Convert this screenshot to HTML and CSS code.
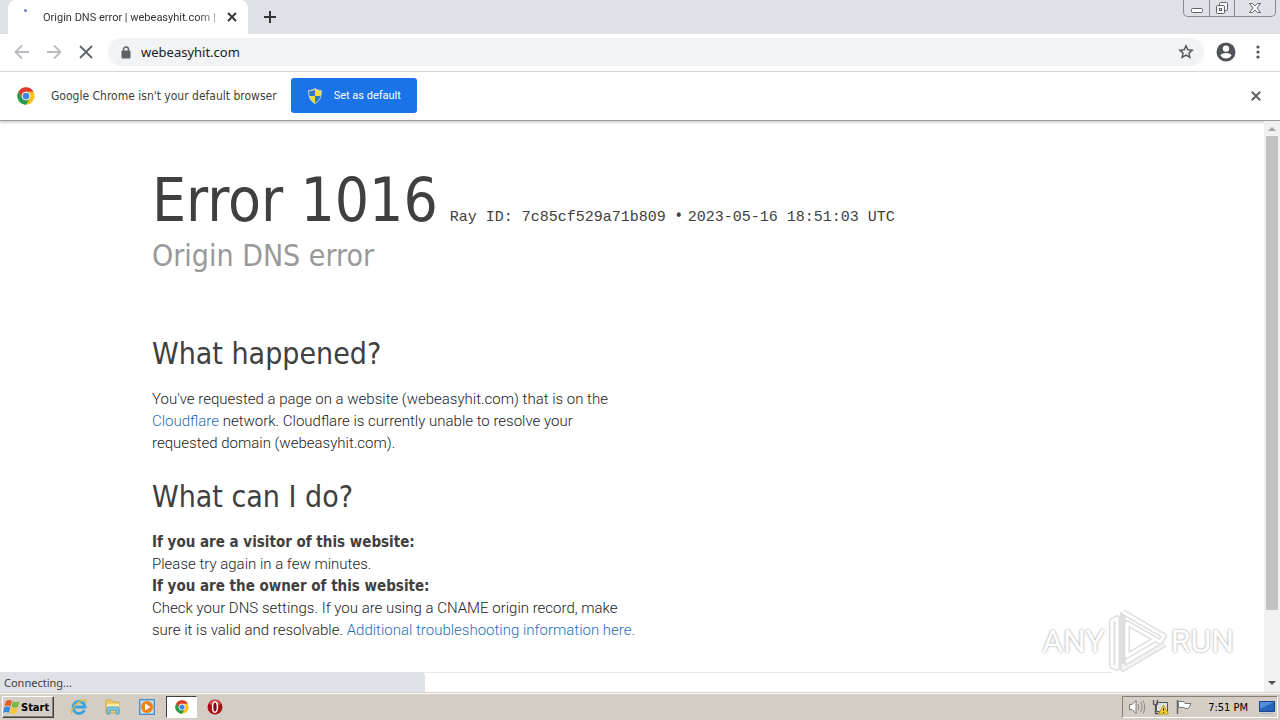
FILE: index.html
```html
<!DOCTYPE html>
<html lang="en">
<head>
<meta charset="utf-8">
<title>Origin DNS error | webeasyhit.com | Cloudflare</title>
<link rel="stylesheet" href="styles.css">
</head>
<body>
<svg class="defs" aria-hidden="true">
  <symbol id="chrome" viewBox="0 0 48 48">
    <circle cx="24" cy="24" r="23" fill="#fbc116"/>
    <path d="M4 12.500A23 23 0 0 1 44 12.500H24A11.500 11.500 0 0 0 14 29.700z" fill="#dc3b2e"/>
    <path d="M4 12.500A23 23 0 0 0 24 47L34 29.700A11.500 11.500 0 0 1 14 29.700z" fill="#229a50"/>
    <circle cx="24" cy="24" r="11.500" fill="#fff"/>
    <circle cx="24" cy="24" r="9" fill="#4285e8"/>
  </symbol>
</svg>
<header class="tabstrip">
  <div class="tab">
    <span class="spinner"></span>
    <span class="tab-title">Origin DNS error | webeasyhit.com |</span>
    <button class="icon-btn tab-close" aria-label="Close tab"><svg width="10" height="10" viewBox="0 0 10 10"><path d="M1 1l8 8M9 1l-8 8" stroke="#303236" stroke-width="1.800"/></svg></button>
  </div>
  <button class="icon-btn new-tab" aria-label="New tab"><svg width="12" height="12" viewBox="0 0 12 12"><path d="M6 0v12M0 6h12" stroke="#303236" stroke-width="2"/></svg></button>
  <div class="window-controls">
    <button class="win-btn" aria-label="Minimize"><svg width="14" height="16" viewBox="0 0 14 16"><rect x="1.500" y="8.500" width="11" height="4" rx="1" fill="#fff" stroke="#5d626a"/></svg></button>
    <button class="win-btn" aria-label="Restore"><svg width="14" height="16" viewBox="0 0 14 16"><g fill="#f8f9fb" stroke="#5d626a"><rect x="4.500" y="2.500" width="8" height="8" rx="1"/><rect x="1.500" y="5.500" width="8" height="8" rx="1"/><rect x="4.500" y="8.500" width="2" height="2"/></g></svg></button>
    <button class="win-btn win-close" aria-label="Close"><svg width="14" height="16" viewBox="0 0 14 16"><path d="M1.500 3.500h3L7 6l2.500-2.500h3L9 8l3.500 4.500h-3L7 10l-2.500 2.500h-3L5 8z" fill="#fff" stroke="#5d626a"/></svg></button>
  </div>
</header>
<nav class="toolbar">
  <button class="icon-btn nav-btn" aria-label="Back"><svg width="16" height="16" viewBox="0 0 16 16"><path d="M15 8H2M8 1.500L1.500 8 8 14.500" fill="none" stroke="#b9bbbe" stroke-width="1.800"/></svg></button>
  <button class="icon-btn nav-btn" aria-label="Forward"><svg width="16" height="16" viewBox="0 0 16 16"><path d="M1 8h13M8 1.500L14.500 8 8 14.500" fill="none" stroke="#b9bbbe" stroke-width="1.800"/></svg></button>
  <button class="icon-btn nav-btn" aria-label="Stop"><svg width="14" height="14" viewBox="0 0 14 14"><path d="M1 1l12 12M13 1L1 13" stroke="#5f6368" stroke-width="1.800"/></svg></button>
  <div class="omnibox">
    <svg width="10" height="13" viewBox="0 0 10 13"><path d="M2.500 5V3.500a2.500 2.500 0 0 1 5 0V5" fill="none" stroke="#5f6368" stroke-width="1.500"/><rect x="0.500" y="4.500" width="9" height="8" rx="1" fill="#5f6368"/></svg>
    <input class="url" type="text" aria-label="Address" value="webeasyhit.com">
    <button class="icon-btn" aria-label="Bookmark"><svg width="16" height="16" viewBox="0 0 16 16"><path d="M8 1.800l1.800 4 4.400.4-3.300 2.900 1 4.300L8 11.100l-3.900 2.300 1-4.300L1.800 6.200l4.400-.4z" fill="none" stroke="#50545a" stroke-width="1.400"/></svg></button>
  </div>
  <button class="icon-btn profile" aria-label="Profile"><svg width="20" height="20" viewBox="0 0 20 20"><circle cx="10" cy="10" r="9.500" fill="#505358"/><circle cx="10" cy="6.600" r="3.200" fill="#fff"/><path d="M4.300 13.500C5.600 11.700 8 11 10 11s4.400.7 5.700 2.500A7 7 0 0 1 10 16.500a7 7 0 0 1-5.700-3z" fill="#fff"/></svg></button>
  <button class="icon-btn menu" aria-label="Menu"><svg width="4" height="14" viewBox="0 0 4 14" fill="#505358"><circle cx="2" cy="2" r="1.600"/><circle cx="2" cy="7" r="1.600"/><circle cx="2" cy="12" r="1.600"/></svg></button>
</nav>
<section class="infobar">
  <svg width="18" height="18"><use href="#chrome"/></svg>
  <span class="infobar-text">Google Chrome isn't your default browser</span>
  <button class="default-btn">
    <svg width="14" height="16" viewBox="0 0 14 16"><path d="M7 .5C5 2 3 2.500.7 2.500c0 6 1 10 6.300 13 5.300-3 6.300-7 6.300-13C11 2.500 9 2 7 .5z" fill="#f5d938" stroke="#c5d5dd"/><path d="M7 1.700V8H1.500C1.200 6.500 1.200 5 1.200 3.200 3.500 3.100 5.200 2.800 7 1.700zM7 8h5.500C11.800 11 10.200 13.200 7 15z" fill="#2c78c8"/></svg>
    Set as default
  </button>
  <button class="icon-btn infobar-close" aria-label="Dismiss"><svg width="10" height="10" viewBox="0 0 10 10"><path d="M.8.800l8.400 8.400M9.200.800L.8 9.200" stroke="#5f6368" stroke-width="2"/></svg></button>
</section>
<div class="viewport">
  <main class="page">
    <div class="wrapper">
      <header class="error-head">
        <h1 class="code">Error 1016</h1>
        <span class="ray">Ray ID: 7c85cf529a71b809</span>
        <span class="dot">•</span>
        <span class="ray">2023-05-16 18:51:03 UTC</span>
      </header>
      <h2 class="subtitle">Origin DNS error</h2>
      <div class="column">
        <h2 class="heading">What happened?</h2>
        <p class="copy">You've requested a page on a website (webeasyhit.com) that is on the <a href="#">Cloudflare</a> network. Cloudflare is currently unable to resolve your requested domain (webeasyhit.com).</p>
        <h2 class="heading">What can I do?</h2>
        <p class="copy"><strong>If you are a visitor of this website:</strong><br>Please try again in a few minutes.</p>
        <p class="copy"><strong>If you are the owner of this website:</strong><br>Check your DNS settings. If you are using a CNAME origin record, make sure it is valid and resolvable. <a href="#">Additional troubleshooting information here.</a></p>
      </div>
      <hr class="rule">
    </div>
  </main>
  <div class="scrollbar">
    <span class="arrow up"></span>
    <span class="thumb"></span>
    <span class="arrow down"></span>
  </div>
  <div class="status">Connecting...</div>
  <div class="watermark">
    <span>ANY</span>
    <svg width="60" height="66" viewBox="0 0 60 66"><g fill="none" stroke-linejoin="round"><g stroke="#dedede" stroke-width="6"><path d="M15 4l41 24-4 6-33-19v33l27-16"/><path d="M15 4v52M9 10L4 13v45l5 2zM15 56v5l42-25"/></g><g stroke="#fff" stroke-width="3"><path d="M15 4l41 24-4 6-33-19v33l27-16"/><path d="M9 10L4 13v45l5 2z"/></g><path d="M15 56v5l42-25" stroke="#f3f3f3" stroke-width="3"/></g></svg>
    <span>RUN</span>
  </div>
</div>
<footer class="taskbar">
  <button class="start">
    <svg width="18" height="16" viewBox="0 0 18 16"><path d="M3 2c2-1.300 3.800-1.300 6 0L7.500 7.500C5.500 6.300 3.500 6.300 1.500 7.500z" fill="#e95c26"/><path d="M10 2.300c2 1.200 4 1.200 6.500 0L15 7.800c-2.500 1.200-4.500 1.200-6.500 0z" fill="#79b93c"/><path d="M1.300 8.300c2-1.200 4-1.200 6 0L6 13.800c-2-1.200-4-1.200-6 0z" fill="#3a8ad3"/><path d="M8.300 8.600c2 1.200 4 1.200 6.500 0l-1.500 5.500c-2.500 1.200-4.500 1.200-6.500 0z" fill="#f8c632"/></svg>Start
  </button>
  <div class="tasks">
    <button class="task" aria-label="Internet Explorer"><svg width="18" height="18" viewBox="0 0 18 18"><path d="M14.500 12A6 6 0 1 1 15 9H4" fill="none" stroke="#39a5dc" stroke-width="2.800"/><path d="M2 16C-.5 14 5 5 12 2.300c4-1.600 5 0 3.800 2.700" fill="none" stroke="#d8bd45" stroke-width="1.300"/></svg></button>
    <button class="task" aria-label="Explorer"><svg width="18" height="18" viewBox="0 0 18 18"><path d="M2 2h5l1 2h7v11H2z" fill="#edcf69" stroke="#d3ad43"/><path d="M3 6h12v5H3z" fill="#f9ebaa"/><path d="M3 16v-5q0-2 2-2h8q2 0 2 2v5h-3v-4H6v4z" fill="#7ec9e4" stroke="#549fc3"/></svg></button>
    <button class="task" aria-label="Media Player"><svg width="18" height="18" viewBox="0 0 18 18"><rect x="1.500" y="1.500" width="15" height="15" fill="#8ec1e8" stroke="#4d8dc3"/><path d="M3 3h12v12H3z" fill="#c7e0f2"/><circle cx="9" cy="9" r="6" fill="#ef8214"/><path d="M7 5.500L12.500 9 7 12.500z" fill="#fff"/></svg></button>
    <button class="task active" aria-label="Chrome"><svg width="14" height="14"><use href="#chrome"/></svg></button>
    <button class="task" aria-label="Opera"><svg width="16" height="16" viewBox="0 0 16 16"><circle cx="8" cy="8" r="7.500" fill="#a90f14"/><path d="M2 5a6.500 6.500 0 0 1 12 0q-6 3-12 0z" fill="#d7484b"/><ellipse cx="8" cy="8" rx="2.400" ry="5.300" fill="#7c090d" stroke="#fff" stroke-width="1.500"/></svg></button>
  </div>
  <div class="tray">
    <svg width="18" height="16" viewBox="0 0 18 16"><path d="M1.500 5.500h2.500l4-4v13l-4-4H1.500z" fill="#fff" stroke="#777"/><path d="M10 5q2 3 0 6M12.500 3q3.500 5 0 10M15 1.500q3.500 6.500 0 13" fill="none" stroke="#888"/></svg>
    <svg class="network" width="17" height="16" viewBox="0 0 17 16"><path d="M4.500 3.500h11v9h-11z" fill="#dce1e3" stroke="#555"/><path d="M1.500 1v4q2 2 4 0V1M3.500 6v8.500h5" fill="none" stroke="#555" stroke-width="1.300"/><path d="M11.500 6l5 9h-10z" fill="#f8cd29" stroke="#bd9821"/><path d="M11.500 9v3M11.500 13v1" stroke="#333"/></svg>
    <svg class="flag" width="17" height="16" viewBox="0 0 17 16"><path d="M1.500 1v14" stroke="#666" stroke-width="1.500"/><path d="M2.500 2.500h5l1.500 2h6l-1.500 3q-1 3-4 2l-2-1h-5z" fill="#fff" stroke="#777"/></svg>
    <time class="clock">7:51 PM</time>
    <svg width="16" height="16" viewBox="0 0 16 16"><path d="M.5 2.500h15v10H.5z" fill="#2765bd" stroke="#17468d"/><path d="M1 3h14L1 10z" fill="#558fd9"/><path d="M2 14.500h12" stroke="#9eb7d0"/></svg>
  </div>
</footer>
</body>
</html>
```
FILE: styles.css
```css
* { box-sizing: border-box; }
body {
  margin: 0;
  height: 100vh;
  display: flex;
  flex-direction: column;
  overflow: hidden;
  background: #fff;
  color: #404040;
  font-family: "DejaVu Sans Condensed", "Noto Sans", sans-serif;
  font-size: 12px;
}
button { font: inherit; color: inherit; border: 0; background: none; padding: 0; }
svg { display: block; flex: none; }
.defs { position: absolute; width: 0; height: 0; }
.icon-btn { display: flex; align-items: center; justify-content: center; flex: none; }

.tabstrip { display: flex; flex: none; height: 34px; padding-left: 8px; background: #dee1e6; }
.tab {
  display: flex;
  align-items: center;
  width: 240px;
  padding: 0 10px 0 16px;
  background: #fff;
  border-radius: 8px 8px 0 0;
  color: #303236;
  font-family: Roboto, sans-serif;
  font-size: 11px;
}
.spinner { width: 3px; height: 3px; margin: 0 16px 13px 0; border-radius: 2px; background: #6587c0; }
.tab-title {
  flex: 1;
  white-space: nowrap;
  -webkit-mask-image: linear-gradient(90deg, #000 88%, #0006);
  mask-image: linear-gradient(90deg, #000 88%, #0006);
}
.tab-close { width: 12px; margin-left: 8px; }
.new-tab { width: 44px; }
.window-controls {
  display: flex;
  height: 17px;
  margin: 0 4px 0 auto;
  border: 1px solid #868b93;
  border-top: 0;
  border-radius: 0 0 5px 5px;
}
.win-btn { display: flex; align-items: center; justify-content: center; width: 25px; }
.win-btn + .win-btn { border-left: 1px solid #868b93; }
.win-close { width: 41px; }

.toolbar {
  display: flex;
  align-items: center;
  flex: none;
  height: 38px;
  padding: 0 10px 1px 6px;
  border-bottom: 1px solid #dadce0;
}
.nav-btn { width: 32px; height: 28px; }
.omnibox {
  display: flex;
  align-items: center;
  flex: 1;
  height: 28px;
  margin-left: 6px;
  padding: 0 10px 0 13px;
  border-radius: 14px;
  background: #f1f3f4;
}
.url {
  flex: 1;
  min-width: 0;
  margin-left: 8px;
  padding: 0 2px;
  border: 0;
  outline: 0;
  background: none;
  color: #202124;
  font-family: "Noto Sans", sans-serif;
  font-size: 13px;
}
.profile { width: 20px; margin-left: 12px; }
.menu { width: 24px; margin-left: 10px; }

.infobar {
  position: relative;
  display: flex;
  align-items: center;
  flex: none;
  height: 49px;
  padding: 0 19px 1px 17px;
  border-bottom: 1px solid #9b9b9b;
  box-shadow: 0 1px 3px #bbb;
}
.infobar-text { margin: 0 14px 0 16px; }
.default-btn {
  display: flex;
  align-items: center;
  gap: 12px;
  height: 35px;
  padding: 0 16px 0 17px;
  border-radius: 3px;
  background: #1a73e8;
  color: #fff;
  font-family: Roboto, sans-serif;
  font-size: 11px;
}
.infobar-close { margin-left: auto; }

.viewport { position: relative; display: flex; flex: 1; min-height: 0; }
.page { flex: 1; min-width: 0; overflow: hidden; padding: 44px 24px 0; }
.wrapper { max-width: 960px; margin: 0 auto; }
h1, h2, p { margin: 0; font-weight: 400; }
.error-head { display: flex; align-items: baseline; }
.code { font-size: 60px; line-height: 70px; margin-right: 12px; }
.ray { font: 15px/20px "Liberation Mono", monospace; }
.dot { margin: 0 5px 0 9px; font-size: 15px; }
.subtitle { color: #999; font-size: 30px; line-height: 42px; }
.column { width: 51%; padding-top: 38px; }
.heading { padding-top: 20px; font-size: 30px; line-height: 38px; margin-bottom: 15px; }
.copy { font: 300 15px/22px Roboto, sans-serif; color: #222; }
.copy + .heading { padding-top: 24px; }
.copy strong { font: 700 15px/22px "DejaVu Sans Condensed", sans-serif; color: #404040; }
.copy a { color: #1f6fb5; text-decoration: none; }
.rule { margin: 31px 0 0; border: 0; border-top: 1px solid #ebebeb; }

.scrollbar {
  display: flex;
  flex-direction: column;
  align-items: center;
  flex: none;
  width: 16px;
  padding: 6px 0 7px;
  background: #f1f1f1;
}
.arrow { border: 4px solid transparent; }
.up { border-top: 0; border-bottom-color: #a3a3a3; }
.down { border-bottom: 0; border-top-color: #505050; margin-top: auto; }
.thumb { width: 12px; height: 85%; margin-top: 5px; background: #c1c1c1; }
.status {
  position: absolute;
  left: 0;
  bottom: 0;
  width: 425px;
  height: 20px;
  padding-left: 4px;
  border-top-right-radius: 4px;
  background: #dee1e6;
  font: 11px/21px "Noto Sans", sans-serif;
}
.watermark {
  position: absolute;
  right: 46px;
  bottom: 18px;
  display: flex;
  align-items: center;
  gap: 3px;
  color: #fff;
  font: 32px/44px Roboto, sans-serif;
  text-shadow: 0 0 2px #aaa, 0 0 3px #ccc;
}

.taskbar {
  display: flex;
  align-items: center;
  flex: none;
  height: 28px;
  padding: 2px 2px 1px;
  border-top: 1px solid #d4d0c8;
  box-shadow: inset 0 1px #fff;
  background: #d4cdc5;
  color: #000;
}
.start {
  display: flex;
  align-items: center;
  height: 22px;
  width: 52px;
  border: 1px solid;
  border-color: #fff #404040 #404040 #fff;
  box-shadow: inset -1px -1px #858078;
  font-size: 11px;
  font-weight: 700;
}
.tasks { display: flex; align-items: center; margin-left: 8px; }
.task { display: flex; align-items: center; justify-content: center; width: 34px; height: 22px; }
.active { width: 31px; margin: 0 1px 0 2px; background: #fff; border: 1px solid; border-color: #404040 #fff #fff #404040; }
.tray {
  display: flex;
  align-items: center;
  height: 22px;
  margin-left: auto;
  padding: 0 2px 0 5px;
  border: 1px solid;
  border-color: #858078 #fff #fff #858078;
}
.network { margin-left: 6px; }
.flag { margin-left: 7px; }
.clock { margin: 0 11px 0 15px; font-size: 11px; }
```
